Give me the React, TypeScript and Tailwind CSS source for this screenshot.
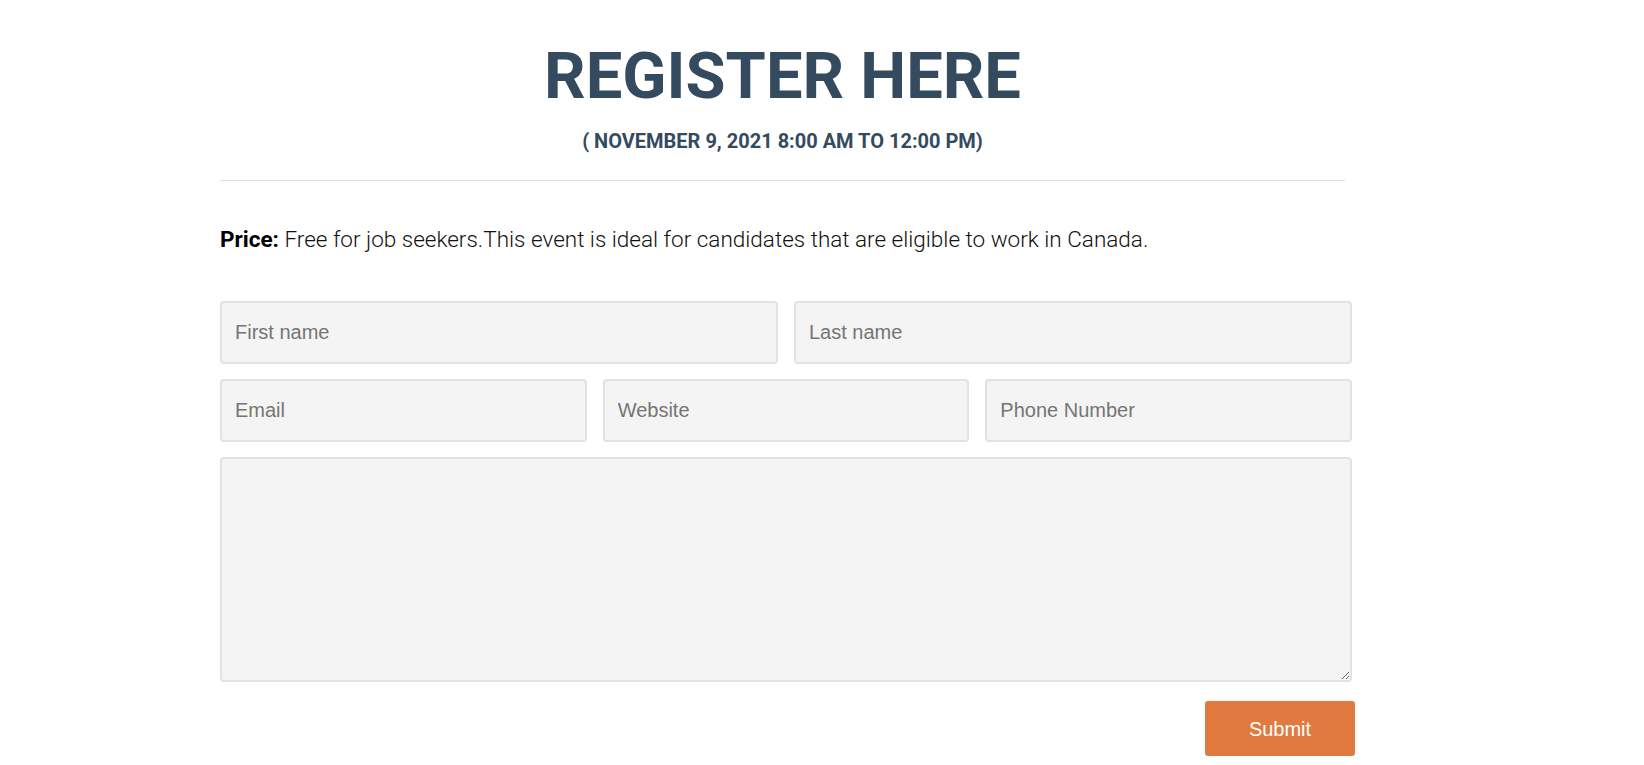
import React from "react";

export default function App() {
    return (
        <div className="min-h-screen bg-white font-['Roboto',sans-serif]">
            <div className="ml-[220px] w-[1135px] pt-[36px]">
                <header className="w-[1125px] text-center text-[#344a5f]">
                    <h1 className="text-[65px] font-bold leading-[80px]">REGISTER HERE</h1>
                    <p className="mt-[12px] text-[20px] font-bold leading-[26px]">
                        ( NOVEMBER 9, 2021 8:00 AM TO 12:00 PM)
                    </p>
                    <hr className="mt-[26px] border-t border-[#dddddd]" />
                </header>

                <p className="mt-[44px] text-[22.5px] font-light leading-[28px] text-[#111]">
                    <span className="font-bold text-black">Price:</span> Free for job seekers.This event is ideal for candidates that are eligible to work in Canada.
                </p>

                <form className="mt-[48px] w-[1132px] flex flex-col gap-[15px] font-['Liberation_Sans',Arial,sans-serif]">
                    <div className="grid grid-cols-2 gap-[16px]">
                        <input placeholder="First name" className="h-[63px] rounded-[4px] border-2 border-[#e2e2e2] bg-[#f4f4f4] px-[13px] text-[20px] text-[#555] placeholder:text-[#757575]" />
                        <input placeholder="Last name" className="h-[63px] rounded-[4px] border-2 border-[#e2e2e2] bg-[#f4f4f4] px-[13px] text-[20px] text-[#555] placeholder:text-[#757575]" />
                    </div>
                    <div className="grid grid-cols-3 gap-[16px]">
                        <input placeholder="Email" className="h-[63px] rounded-[4px] border-2 border-[#e2e2e2] bg-[#f4f4f4] px-[13px] text-[20px] text-[#555] placeholder:text-[#757575]" />
                        <input placeholder="Website" className="h-[63px] rounded-[4px] border-2 border-[#e2e2e2] bg-[#f4f4f4] px-[13px] text-[20px] text-[#555] placeholder:text-[#757575]" />
                        <input placeholder="Phone Number" className="h-[63px] rounded-[4px] border-2 border-[#e2e2e2] bg-[#f4f4f4] px-[13px] text-[20px] text-[#555] placeholder:text-[#757575]" />
                    </div>
                    <textarea className="h-[225px] rounded-[4px] border-2 border-[#e2e2e2] bg-[#f4f4f4] px-[13px] py-[10px] text-[20px] text-[#555]" />
                </form>

                <div className="mt-[19px] flex justify-end">
                    <button className="h-[55px] w-[150px] rounded-[3px] bg-[#e07a3f] text-[20px] text-white font-['Liberation_Sans',Arial,sans-serif]">
                        Submit
                    </button>
                </div>
            </div>
        </div>
    );
}
